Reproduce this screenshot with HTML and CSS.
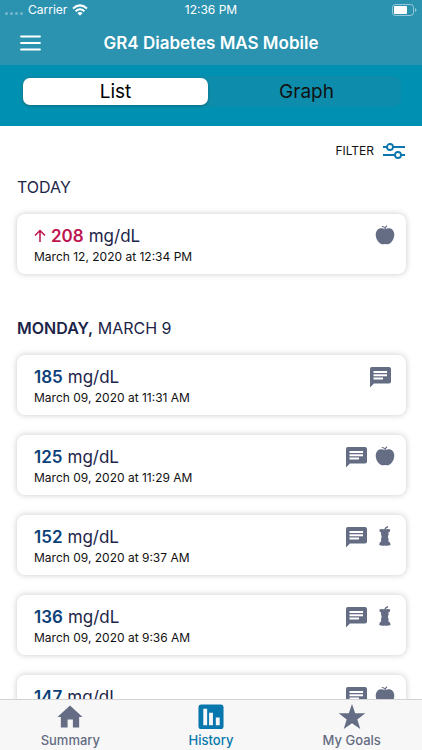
FILE: index.html
```html
<!DOCTYPE html>
<html lang="en">
<head>
<meta charset="utf-8">
<meta name="viewport" content="width=device-width, initial-scale=1">
<title>GR4 Diabetes MAS Mobile</title>
<link rel="stylesheet" href="styles.css">
</head>
<body>
<svg class="sprite" aria-hidden="true">
  <symbol id="comment" viewBox="0 0 22 22">
    <path fill-rule="evenodd" d="M3 1h17q2 0 2 2v12.500q0 2-2 2H5l-4 4V3q0-2 2-2zM4.500 5v2h13.500V5zM4.500 8.300v2h13.500V8.300zM4.500 11.600v2h9.500v-2z"/>
  </symbol>
  <symbol id="apple" viewBox="0 0 20 20">
    <path d="M10 4.200C12.500 2.800 15.400 2.800 17.300 4.600C20.600 8 19.500 14 16 17.600C14 19.700 12.300 19.500 10 19C7.700 19.500 6 19.700 4 17.600C.5 14-.6 8 2.700 4.600C4.600 2.800 7.500 2.800 10 4.200z"/>
    <path d="M10 4Q10.200 2 12 .7M9.700 3Q9 1.400 6.800 1.500" fill="none" stroke="currentColor" stroke-width="1.200"/>
  </symbol>
  <symbol id="core" viewBox="0 0 20 20">
    <path d="M4.300 3.500Q7 2.600 9.800 3.600Q12.500 2.600 15.300 3.500L14.800 5.800L13.400 6.500L13.600 8.500L12.900 10.800L13.600 13L13.400 15.500L15 16.600L15.500 19Q12.500 20 9.800 19.400Q7 20 4.200 19L4.700 16.600L6.200 15.500L6 13L6.700 10.800L6 8.500L6.200 6.500L4.800 5.800z"/>
    <path d="M9.800 4Q10 1.600 13 .6" fill="none" stroke="currentColor" stroke-width="1.300"/>
  </symbol>
</svg>
<div class="app">
  <header class="top">
    <div class="status">
      <div class="carrier">
        <span class="dots"><i></i><i></i><i></i><i></i></span>
        <span>Carrier</span>
        <svg class="wifi" viewBox="0 0 16 12" aria-hidden="true">
          <g fill="none" stroke="currentColor" stroke-width="2"><path d="M1 4.500Q8-1.800 15 4.500"/><path d="M3.500 7.200Q8 3.200 12.500 7.200"/></g>
          <path d="M5.400 9Q8 6.900 10.600 9L8 11.700z" fill="currentColor"/>
        </svg>
      </div>
      <span>12:36 PM</span>
      <svg class="battery" viewBox="0 0 25 12" aria-hidden="true">
        <rect x=".5" y=".5" width="21" height="11" rx="3" fill="none" stroke="currentColor" opacity=".5"/>
        <rect x="2" y="2" width="13" height="8" rx="1" fill="currentColor"/>
        <path d="M23 4v4q1.500-.5 1.500-2T23 4z" fill="currentColor" opacity=".5"/>
      </svg>
    </div>
    <div class="nav">
      <button class="menu" type="button" aria-label="Menu"><svg viewBox="0 0 21 16"><path d="M1 1.500h19M1 8h19M1 14.500h19" stroke="currentColor" stroke-width="1.800" stroke-linecap="round"/></svg></button>
      <h1>GR4 Diabetes MAS Mobile</h1>
    </div>
  </header>
  <div class="band">
    <div class="segments">
      <button class="segment selected" type="button">List</button>
      <button class="segment" type="button">Graph</button>
    </div>
  </div>
  <main class="content">
    <button class="filter" type="button">FILTER
      <svg viewBox="0 0 24 18" stroke="currentColor" stroke-width="1.800"><path d="M1 5h4M11 5h12M1 13h12M19 13h4"/><circle cx="8" cy="5" r="3"/><circle cx="16" cy="13" r="3"/></svg>
    </button>
    <section>
      <h2>TODAY</h2>
      <article class="card">
        <div><p class="reading high"><svg class="arrow" viewBox="0 0 12 14" aria-label="High"><path d="M6 13V1.500M1 6.500l5-5 5 5" fill="none" stroke="currentColor" stroke-width="1.500"/></svg><b>208</b> mg/dL</p><time>March 12, 2020 at 12:34 PM</time></div>
        <div class="icons"><svg class="food"><use href="#apple"/></svg></div>
      </article>
    </section>
    <section>
      <h2><b>MONDAY,</b> MARCH 9</h2>
      <article class="card">
        <div><p class="reading"><b>185</b> mg/dL</p><time>March 09, 2020 at 11:31 AM</time></div>
        <div class="icons"><svg class="note"><use href="#comment"/></svg></div>
      </article>
      <article class="card">
        <div><p class="reading"><b>125</b> mg/dL</p><time>March 09, 2020 at 11:29 AM</time></div>
        <div class="icons"><svg class="note"><use href="#comment"/></svg><svg class="food"><use href="#apple"/></svg></div>
      </article>
      <article class="card">
        <div><p class="reading"><b>152</b> mg/dL</p><time>March 09, 2020 at 9:37 AM</time></div>
        <div class="icons"><svg class="note"><use href="#comment"/></svg><svg class="food"><use href="#core"/></svg></div>
      </article>
      <article class="card">
        <div><p class="reading"><b>136</b> mg/dL</p><time>March 09, 2020 at 9:36 AM</time></div>
        <div class="icons"><svg class="note"><use href="#comment"/></svg><svg class="food"><use href="#core"/></svg></div>
      </article>
      <article class="card">
        <div><p class="reading"><b>147</b> mg/dL</p></div>
        <div class="icons"><svg class="note"><use href="#comment"/></svg><svg class="food"><use href="#apple"/></svg></div>
      </article>
    </section>
  </main>
  <nav class="tabs">
    <a href="#summary"><svg viewBox="0 0 28 28"><path d="M14 2.500L27 14.500H23.500V25.500H17V17H11.500V25.500H4.500V14.500H1L14 2.500z"/></svg>Summary</a>
    <a class="current" href="#history" aria-current="page"><svg viewBox="0 0 28 28"><path fill-rule="evenodd" d="M4 1.500H24Q27 1.500 27 4.500V24Q27 27 24 27H4Q1 27 1 24V4.500Q1 1.500 4 1.500zM6 6V23H10V6zM12 10V23H16V10zM19 15V23H23V15z"/></svg>History</a>
    <a href="#goals"><svg viewBox="0 0 28 28"><path d="M14 1L17.300 10.600L27.800 10.700L19.500 17L22.600 27L14 21L5.400 27L8.500 17L.2 10.700L10.700 10.600z"/></svg>My Goals</a>
  </nav>
</div>
</body>
</html>
```
FILE: styles.css
```css
* { box-sizing: border-box; }
body, h1, h2, p { margin: 0; }
body { font-family: Inter, "Liberation Sans", sans-serif; background: #fff; color: #1c2448; }
button { font: inherit; color: inherit; border: 0; padding: 0; background: none; }
svg { display: block; fill: currentColor; }
.sprite { display: none; }
.app { display: flex; flex-direction: column; height: 100vh; overflow: hidden; }

.top { background: #2b92b0; color: #fff; flex: none; }
.status { display: grid; grid-template-columns: 1fr auto 1fr; align-items: center; height: 20px; padding: 0 5px; font-size: 12px; line-height: 20px; }
.carrier { display: flex; align-items: center; gap: 5px; }
.dots { display: flex; gap: 2px; opacity: .35; padding-top: 6px; }
.dots i { width: 3px; height: 3px; border-radius: 50%; background: #fff; }
.wifi { width: 16px; height: 12px; }
.battery { width: 25px; height: 12px; justify-self: end; }
.nav { display: grid; grid-template-columns: 22px 1fr 22px; align-items: center; height: 45px; padding: 0 20px; }
.menu svg { width: 21px; height: 16px; }
h1 { font-size: 17px; line-height: 22px; font-weight: 600; text-align: center; }

.band { background: #0090b1; flex: none; padding: 11px 21px 19px; }
.segments { display: flex; gap: 6px; padding: 2px; border-radius: 8px; background: #0d8dab; }
.segment { flex: 1; height: 27px; border-radius: 7px; font-size: 19px; line-height: 27px; color: #111; }
.selected { background: #fff; color: #000; box-shadow: 0 1px 3px #00000040; }

.content { flex: 1; min-height: 0; overflow: hidden; padding: 14px 16px 0 17px; }
.filter { display: flex; align-items: center; gap: 8px; margin-left: auto; font-size: 12px; line-height: 22px; color: #111; }
.filter svg { width: 24px; height: 18px; fill: none; color: #0d76ae; }
section { margin-bottom: 43px; }
.filter + section { margin-top: 14px; }
h2 { font-size: 16px; line-height: 22px; font-weight: 400; margin-bottom: 16px; }
h2 b { font-weight: 600; }
.card { display: flex; justify-content: space-between; height: 60px; margin-bottom: 20px; padding: 11px 11px 0 17px; border-radius: 8px; background: #fff; box-shadow: 0 0 6px #00000038; }
.reading { display: flex; align-items: center; gap: 5px; font-size: 17px; line-height: 22px; }
.reading b { font-weight: 600; color: #0b4079; }
.high .arrow, .high b { color: #bd1550; }
.arrow { width: 12px; height: 14px; }
time { display: block; font-size: 12px; line-height: 20px; color: #111; }
.icons { display: flex; gap: 4px; color: #656d84; }
.note { width: 22px; height: 22px; margin-right: 4px; }
.food { width: 20px; height: 20px; }

.tabs { display: flex; flex: none; height: 51px; padding-top: 3px; background: #f7f7f7; border-top: 1px solid #d3d3d5; position: relative; }
.tabs a { flex: 1; display: flex; flex-direction: column; align-items: center; font-size: 13px; line-height: 20px; font-weight: 500; color: #656d84; text-decoration: none; }
.tabs svg { width: 28px; height: 28px; }
.tabs .current { color: #0877ad; }
```
